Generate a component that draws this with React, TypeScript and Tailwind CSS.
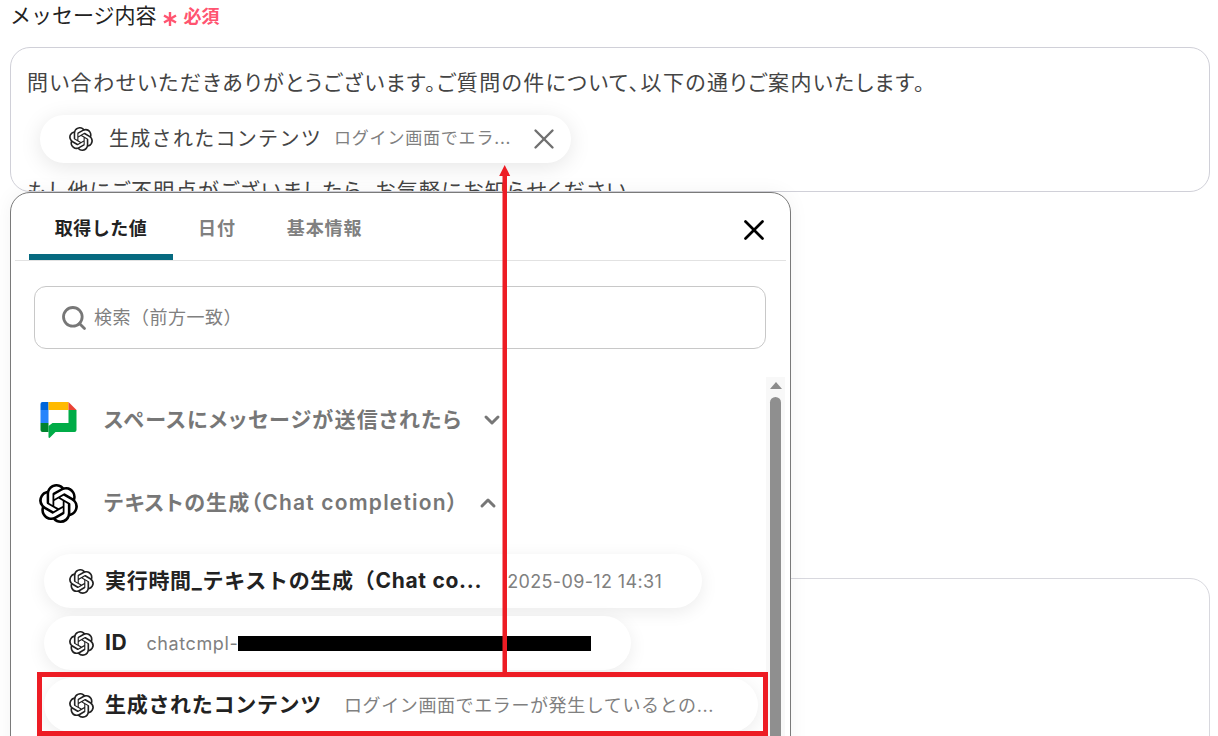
import { SiOpenai } from "react-icons/si";
import { X, Search, ChevronDown, ChevronUp } from "lucide-react";

const FONT = "font-['Inter','Noto_Sans_CJK_JP',sans-serif]";

function GoogleChatIcon() {
  return (
    <svg width="37" height="36" viewBox="0 0 36 36" className="shrink-0">
      <path d="M8 0H2Q0 0 0 2V8H8Z" fill="#0066da" />
      <rect x="0" y="8" width="8" height="13" fill="#2684fc" />
      <path d="M0 21H8V30H2Q0 30 0 28Z" fill="#00832d" />
      <rect x="8" y="0" width="20" height="8" fill="#ffba00" />
      <path d="M28 0L36 8H28Z" fill="#ea4335" />
      <path d="M28 8H36V28Q36 30 34 30H15L9 36Q8 36 8 35V24L12 21H28Z" fill="#00ac47" />
    </svg>
  );
}

function RequiredStar() {
  return (
    <svg width="14" height="16" viewBox="0 0 14 16" className="mt-[11px] ml-[6px] shrink-0" stroke="#ff5470" strokeWidth="2.4">
      <path d="M7 1V15M1 4.5L13 11.5M13 4.5L1 11.5" />
    </svg>
  );
}

function ValuePill({ label, value, className, gap }: { label: string; value: React.ReactNode; className: string; gap: string }) {
  return (
    <div className={`flex h-[54px] items-center rounded-full bg-white pl-[25px] shadow-[0_4px_18px_rgba(0,0,0,0.08)] ${className}`}>
      <SiOpenai className="size-[25px] shrink-0 text-[#222]" />
      <span className="ml-[11px] whitespace-nowrap text-[21px] font-bold tracking-[0.7px] text-[#222]">{label}</span>
      <span className={`whitespace-nowrap text-[18px] tracking-[0.6px] text-[#808080] ${gap}`}>{value}</span>
    </div>
  );
}

export default function App() {
  return (
    <div className={`relative h-[736px] w-[1218px] overflow-hidden bg-white pr-[8px] pl-[10px] ${FONT}`}>
      <div className="flex h-[47px] items-start">
        <span className="text-[21px] leading-[31px] text-[#222]">メッセージ内容</span>
        <RequiredStar />
        <span className="ml-[7px] text-[18px] leading-[33px] font-bold text-[#ff5470]">必須</span>
      </div>

      <div className="h-[145px] overflow-hidden rounded-[20px] border border-[#d0d0d8] px-[16px] pt-[20px] text-[20px] text-[#444]">
        <p className="text-[21px] leading-[30px] tracking-[1.4px] whitespace-nowrap [font-feature-settings:'palt']">問い合わせいただきありがとうございます。ご質問の件について、以下の通りご案内いたします。</p>
        <div className="mt-[17px] ml-[13px] flex h-[48px] w-[531px] items-center rounded-full bg-white pl-[29px] shadow-[0_4px_22px_rgba(0,0,0,0.1)]">
          <SiOpenai className="size-[24px] shrink-0 text-[#222]" />
          <span className="ml-[16px] whitespace-nowrap tracking-[1.3px]">生成されたコンテンツ</span>
          <span className="ml-[12px] whitespace-nowrap text-[17px] tracking-[0.8px] text-[#808080]">ログイン画面でエラ...</span>
          <X className="ml-[16px] size-[34px] text-[#707070]" strokeWidth={1.7} />
        </div>
        <p className="mt-[13px] text-[21px] leading-[30px] tracking-[1.4px] whitespace-nowrap [font-feature-settings:'palt']">もし他にご不明点がございましたら、お気軽にお知らせください。</p>
      </div>

      <div className="mt-[386px] h-[200px] rounded-[20px] border border-[#d8d8de]" />

      {/* popup over the form */}
      <div className="absolute top-[192px] left-[10px] h-[600px] w-[781px] rounded-[20px] border border-[#7a7a7a] bg-white px-[4px] shadow-[0_0_20px_rgba(0,0,0,0.05)]">
        <div className="relative flex h-[68px] border-b border-[#e2e2e2] text-[18px] font-bold">
          <div className="ml-[14px] flex h-full w-[144px] items-center justify-center rounded-t-[5px] border-b-[6px] border-[#066a80] pt-[9px] tracking-[0.03em] text-[#222]">取得した値</div>
          <div className="ml-[25px] flex items-center pt-[3px] tracking-[0.05em] text-[#808080]">日付</div>
          <div className="ml-[51px] flex items-center pt-[3px] tracking-[0.05em] text-[#808080]">基本情報</div>
          <X className="absolute top-[20px] right-[15px] size-[34px] text-black" strokeWidth={1.9} />
        </div>

        <div className="mx-[19px] mt-[25px] flex h-[63px] w-[732px] items-center rounded-[12px] border border-[#c8c8c8] pl-[25px]">
          <Search className="size-[28px] text-[#777]" strokeWidth={2.4} />
          <span className="ml-[6px] text-[18px] tracking-[0.5px] text-[#808080]">検索（前方一致）</span>
        </div>

        <div className="relative mt-[28px] pt-[25px] pr-[20px]">
          <div className="absolute top-[0px] right-[1px] flex h-[400px] w-[19px] flex-col items-center bg-[#f8f8f8]">
            <div className="mt-[5px] h-0 w-0 border-x-[6px] border-b-[7px] border-x-transparent border-b-[#8c8c8c]" />
            <div className="mt-[8px] h-[380px] w-[11px] rounded-full bg-[#8f8f8f]" />
          </div>

          <div className="ml-[25px] flex h-[36px] items-center">
            <GoogleChatIcon />
            <span className="ml-[27px] whitespace-nowrap text-[21px] font-semibold tracking-[1.3px] text-[#777] [font-feature-settings:'palt']">スペースにメッセージが送信されたら</span>
            <ChevronDown className="ml-[18px] size-[24px] text-[#777]" strokeWidth={3} />
          </div>

          <div className="mt-[46px] ml-[24px] flex h-[38px] items-center">
            <SiOpenai className="size-[39px] shrink-0 text-black" />
            <span className="ml-[26px] whitespace-nowrap text-[21px] font-semibold tracking-[1.2px] text-[#777] [font-feature-settings:'palt']">テキストの生成（Chat completion）</span>
            <ChevronUp className="ml-[17px] size-[24px] text-[#777]" strokeWidth={3} />
          </div>

          <div className="mt-[32px] ml-[29px] flex flex-col gap-[8px]">
            <ValuePill className="w-[658px]" gap="ml-[25px]" label="実行時間_テキストの生成（Chat co..." value={<span className="tracking-[0.35px]">2025-09-12 14:31</span>} />
            <ValuePill
              className="w-[587px]"
              gap="ml-[19px]"
              label="ID"
              value={
                <span className="flex items-center">
                  chatcmpl-<span className="inline-block h-[15px] w-[353px] bg-black" />
                </span>
              }
            />
            <ValuePill className="w-[714px]" gap="ml-[22px]" label="生成されたコンテンツ" value="ログイン画面でエラーが発生しているとの..." />
          </div>
        </div>
      </div>

      {/* red annotation */}
      <div className="absolute top-[672px] left-[37px] h-[64px] w-[731px] border-[5px] border-[#ed1c24]" />
      <svg className="absolute top-[160px] left-[495px]" width="20" height="514" viewBox="0 0 20 514">
        <path d="M7.5 14H12V514H7.5Z" fill="#ed1c24" />
        <path d="M9.7 5L15.2 16H4.2Z" fill="#ed1c24" />
      </svg>
    </div>
  );
}
